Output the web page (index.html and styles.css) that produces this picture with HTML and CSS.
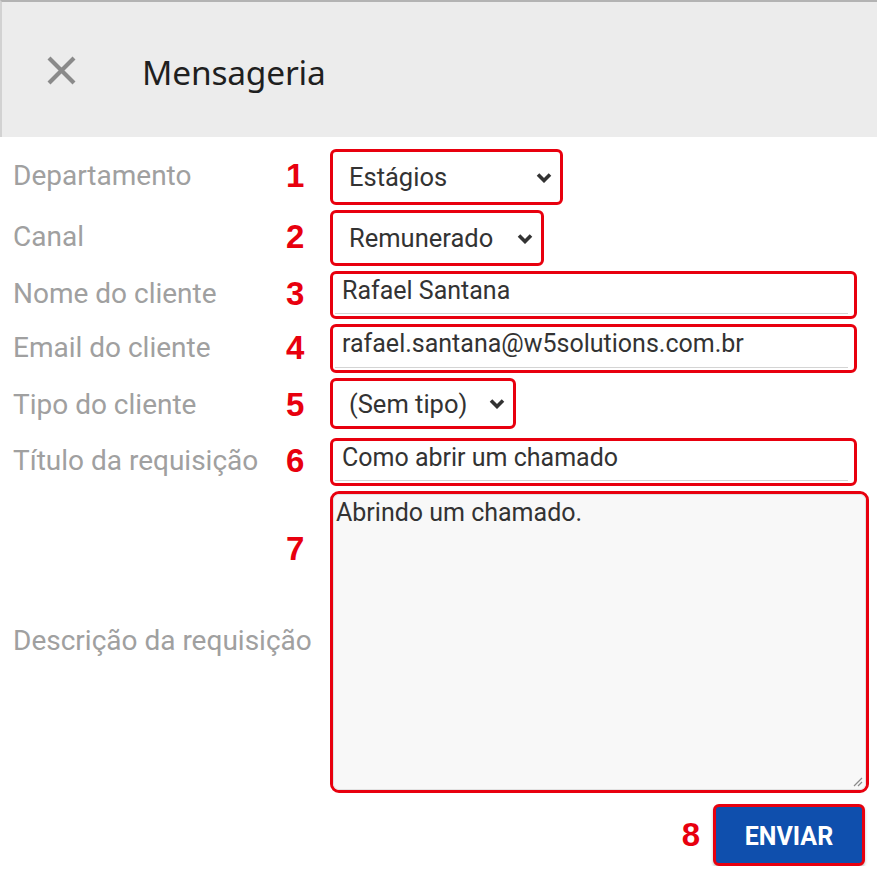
FILE: index.html
```html
<!DOCTYPE html>
<html lang="pt-BR">
<head>
<meta charset="utf-8">
<title>Mensageria</title>
<link rel="stylesheet" href="styles.css">
</head>
<body>
<header class="header">
  <svg class="close" width="31" height="29" viewBox="0 0 31 29"><path d="M3 2 L28 27 M28 2 L3 27" stroke="#8a8a8a" stroke-width="4.2" stroke-linecap="butt" fill="none"/></svg>
  <h1 class="title">Mensageria</h1>
</header>
<main class="form">
  <div class="row r1">
    <span class="label">Departamento</span>
    <span class="num">1</span>
    <div class="ctl select s1"><span class="val">Estágios</span><svg class="chev" width="16" height="11" viewBox="0 0 16 11"><path d="M2 2.5 L8 8.5 L14 2.5" stroke="#333" stroke-width="3.6" fill="none"/></svg></div>
  </div>
  <div class="row r2">
    <span class="label">Canal</span>
    <span class="num">2</span>
    <div class="ctl select s2"><span class="val">Remunerado</span><svg class="chev" width="16" height="11" viewBox="0 0 16 11"><path d="M2 2.5 L8 8.5 L14 2.5" stroke="#333" stroke-width="3.6" fill="none"/></svg></div>
  </div>
  <div class="row r3">
    <span class="label">Nome do cliente</span>
    <span class="num">3</span>
    <div class="ctl input"><div class="inner">Rafael Santana</div></div>
  </div>
  <div class="row r4">
    <span class="label">Email do cliente</span>
    <span class="num">4</span>
    <div class="ctl input"><div class="inner">rafael.santana@w5solutions.com.br</div></div>
  </div>
  <div class="row r5">
    <span class="label">Tipo do cliente</span>
    <span class="num">5</span>
    <div class="ctl select s5"><span class="val">(Sem tipo)</span><svg class="chev" width="16" height="11" viewBox="0 0 16 11"><path d="M2 2.5 L8 8.5 L14 2.5" stroke="#333" stroke-width="3.6" fill="none"/></svg></div>
  </div>
  <div class="row r6">
    <span class="label">Título da requisição</span>
    <span class="num">6</span>
    <div class="ctl input"><div class="inner">Como abrir um chamado</div></div>
  </div>
  <div class="row r7">
    <span class="label">Descrição da requisição</span>
    <span class="num n7">7</span>
    <div class="ctl textarea"><div class="ta-inner">Abrindo um chamado.<svg class="grip" width="12" height="12" viewBox="0 0 12 12"><path d="M11 3 L3 11 M11 7 L7 11" stroke="#8a8a8a" stroke-width="1.2"/></svg></div></div>
  </div>
  <div class="actions">
    <span class="num">8</span>
    <button class="btn">ENVIAR</button>
  </div>
</main>
</body>
</html>
```
FILE: styles.css
```css
* { box-sizing: border-box; }
html, body { margin: 0; padding: 0; background: #fff; }
body { font-family: Roboto, "Liberation Sans", Arial, sans-serif; width: 877px; }

.header {
  height: 137px;
  background: #ececec;
  border-top: 2px solid #b3b3b3;
  border-left: 2px solid #d2d2d2;
  display: flex;
  align-items: center;
  padding-left: 44px;
}
.close { display: block; margin-top: 1px; }
.title {
  margin: 0 0 0 65px;
  font-family: "Noto Sans", "Open Sans", sans-serif;
  font-weight: 400;
  font-size: 33.5px;
  color: #1f1f1f;
  letter-spacing: -0.2px;
  padding-top: 4px;
}

.form { padding-top: 12px; }
.row {
  display: grid;
  grid-template-columns: 280px 50px 1fr;
  align-items: center;
  margin-bottom: 5px;
}
.label {
  padding-left: 13px;
  font-size: 28px;
  color: #a0a0a0;
  white-space: nowrap;
  margin-top: -3px;
}
.num {
  padding-left: 6px;
  font-family: "Liberation Sans", Arial, sans-serif;
  font-weight: 700;
  font-size: 33px;
  color: #e8000e;
  line-height: 40px;
  margin-top: -2px;
}
.n7 { align-self: start; margin-top: 38px; }

.ctl {
  border: 3px solid #e8000e;
  border-radius: 6px;
  background: #fff;
  color: #333;
}
.select {
  display: flex;
  align-items: center;
  justify-content: space-between;
  padding: 0 8px 0 16px;
  font-size: 25.5px;
  justify-self: start;
}
.s1 { width: 233px; height: 56px; }
.s2 { width: 214px; height: 56px; }
.s5 { width: 186px; height: 51px; align-self: start; }
.r5 { height: 55px; }
.val { line-height: 30px; }
.chev { display: block; }

.input {
  margin-right: 20px;
  height: 48px;
  padding: 0 6px 2px 2px;
}
.r4 .input { height: 49px; }
.r6 .input { height: 48px; }
.inner {
  height: 100%;
  border-bottom: 1px solid #d4d4d4;
  padding: 2px 0 0 7px;
  font-size: 25px;
  line-height: 30px;
  white-space: nowrap;
}

.textarea {
  margin-right: 8px;
  height: 302px;
  border-radius: 9px;
  background: #f8f8f8;
  overflow: hidden;
}
.ta-inner {
  position: relative;
  height: 100%;
  padding: 3px 0 0 2px;
  font-size: 25px;
  line-height: 30px;
  border: 1px solid #e2e2e2;
  border-radius: 6px;
}
.grip { position: absolute; right: 2px; bottom: 2px; }

.actions {
  display: flex;
  justify-content: flex-end;
  align-items: center;
  margin-top: 11px;
  padding-right: 12px;
  gap: 13px;
}
.actions .num { padding-left: 0; margin-top: 0; }
.btn {
  width: 152px;
  height: 62px;
  border: 3px solid #e8000e;
  border-radius: 6px;
  background: #0f4fad;
  color: #fff;
  font-family: Roboto, "Liberation Sans", sans-serif;
  font-weight: 700;
  font-size: 25px;
  padding: 2px 0 0;
  box-shadow: 0 2px 3px rgba(0,0,0,0.25);
}
```
